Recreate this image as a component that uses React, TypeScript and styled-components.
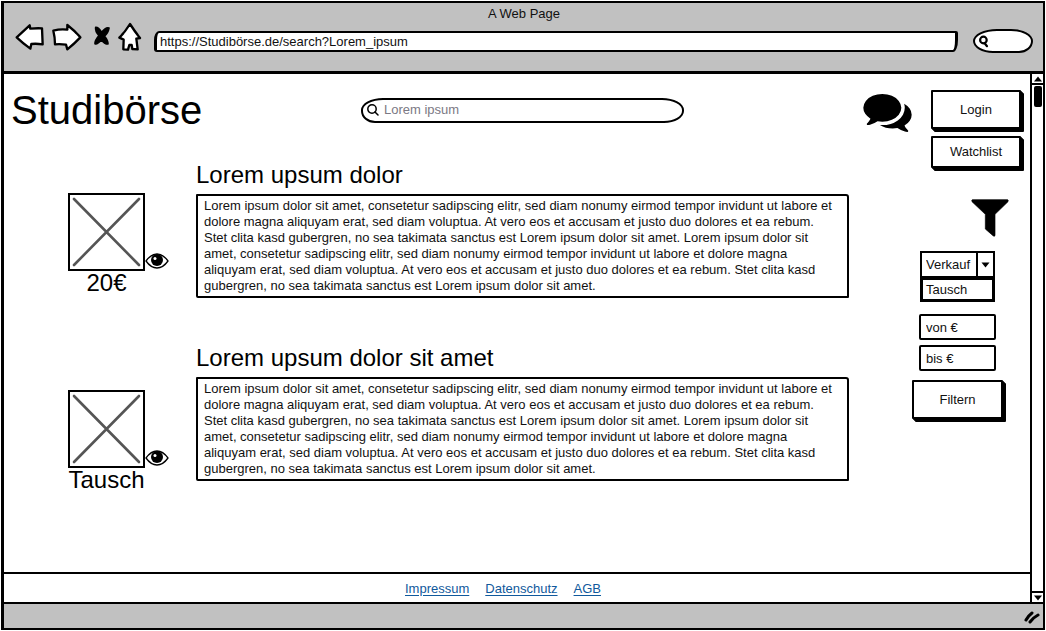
import React from "react";
import styled, { createGlobalStyle } from "styled-components";

const ink = "#000";
const chrome = "#c1c1c1";

const GlobalStyle = createGlobalStyle`
  *, *::before, *::after { box-sizing: border-box; }
  body {
    margin: 0;
    padding: 1px;
    background: #fff;
    color: #111;
    font-family: "Liberation Sans", Arial, sans-serif;
    font-size: 13px;
    line-height: 16px;
  }
  button, input, select { font: inherit; color: inherit; }
  h1, h2, p, ul, figure { margin: 0; padding: 0; }
  svg { display: block; flex: none; }
`;

const BrowserFrame = styled.div`
  display: flex;
  flex-direction: column;
  min-height: calc(100vh - 2px);
  border: 2px solid ${ink};
  border-left-width: 3px;
`;

const Toolbar = styled.header`
  padding: 3px 10px 11px 11px;
  background: ${chrome};
  border-bottom: 3px solid ${ink};
`;

const WindowTitle = styled.div`
  text-align: center;
`;

const ToolbarRow = styled.div`
  display: flex;
  align-items: center;
  gap: 15px;
`;

const NavGroup = styled.nav`
  display: flex;
  gap: 6px;
  margin-right: -4px;
`;

const NavButton = styled.button`
  padding: 0;
  border: 0;
  background: none;
`;

const AddressInput = styled.input`
  flex: 1;
  min-width: 0;
  height: 21px;
  padding: 0 3px;
  border: 2px solid ${ink};
  border-left-width: 3px;
  border-right-width: 3px;
  border-radius: 5px 2px 5px 3px / 9px 2px 12px 3px;
  background: #fff;
`;

const SearchPill = styled.label<{ $compact?: boolean }>`
  display: flex;
  align-items: center;
  gap: 5px;
  width: ${(p) => (p.$compact ? "60px" : "auto")};
  height: ${(p) => (p.$compact ? "24px" : "25px")};
  padding: 0 4px;
  border: 2px solid ${ink};
  border-radius: ${(p) => (p.$compact ? "24px 22px 14px 20px / 12px" : "22px 22px 20px 14px / 12px")};
  background: #fff;
`;

const PillInput = styled.input`
  flex: 1;
  min-width: 0;
  padding: 0;
  border: 0;
  outline: 0;
  background: none;
  &::placeholder { color: #7b7984; opacity: 1; }
`;

const Viewport = styled.div`
  display: flex;
  flex: 1;
`;

const Page = styled.div`
  display: flex;
  flex: 1;
  flex-direction: column;
  min-width: 0;
`;

const PageBody = styled.div`
  display: flex;
  flex: 1;
`;

const MainColumn = styled.main`
  flex: 1;
  min-width: 0;
`;

const Masthead = styled.div`
  display: grid;
  grid-template-columns: 350fr 323fr 165fr;
  align-items: center;
  height: 72px;
  padding-left: 7px;
`;

const SiteName = styled.h1`
  color: ${ink};
  font-size: 40px;
  font-weight: 400;
  line-height: 44px;
`;

const ResultList = styled.div`
  display: flex;
  flex-direction: column;
  gap: 46px;
  padding: 15px 0 24px 64px;
`;

const Result = styled.article`
  display: flex;
  gap: 27px;
`;

const Offer = styled.figure<{ $lowered?: boolean }>`
  width: 101px;
  height: 102px;
  margin-top: ${(p) => (p.$lowered ? "46px" : "32px")};
  margin-bottom: ${(p) => (p.$lowered ? "-13px" : "0")};
`;

const Picture = styled.div`
  display: flex;
  align-items: flex-end;
`;

const Thumbnail = styled.div`
  width: 77px;
  height: 78px;
  border: 2px solid ${ink};
`;

const WatchButton = styled.button`
  padding: 0;
  border: 0;
  background: none;
`;

const OfferLabel = styled.figcaption`
  width: 77px;
  color: ${ink};
  font-size: 24px;
  line-height: 24px;
  text-align: center;
  white-space: nowrap;
`;

const ResultText = styled.div`
  flex: 1;
  min-width: 0;
`;

const ResultTitle = styled.h2`
  margin-bottom: 5px;
  color: ${ink};
  font-size: 24px;
  font-weight: 400;
  line-height: 28px;
`;

const Description = styled.p`
  padding: 2px 5px 2px 6px;
  border: 2px solid ${ink};
  border-radius: 1px 3px 1px 2px;
`;

const Line = styled.span`
  display: block;
  white-space: nowrap;
`;

const Sidebar = styled.aside`
  display: flex;
  flex: none;
  flex-direction: column;
  align-items: flex-end;
  width: 181px;
  padding: 16px 9px 0 14px;
`;

const AccountRow = styled.div`
  display: flex;
  gap: 19px;
`;

const ChatLink = styled.a`
  padding-top: 4px;
  color: ${ink};
`;

const AccountButtons = styled.div`
  display: flex;
  flex-direction: column;
  gap: 7px;
  width: 90px;
`;

const SketchButton = styled.button<{ $size: "small" | "large" }>`
  width: 100%;
  height: ${(p) => (p.$size === "large" ? "39px" : "32px")};
  padding: 0;
  border: 2px solid ${ink};
  border-radius: 1px;
  background: #fff;
  box-shadow: 1px 1px 0 ${ink}, 2px 2px 0 ${ink}, 3px 3px 0 ${ink};
`;

const FunnelMark = styled.div`
  margin: 31px 12px 14px 0;
`;

const FilterForm = styled.form`
  display: flex;
  flex-direction: column;
  align-items: center;
  width: 91px;
  margin-right: 18px;
`;

const SelectGroup = styled.div`
  width: 75px;
`;

const SelectBox = styled.div`
  position: relative;
`;

const KindSelect = styled.select`
  display: block;
  width: 100%;
  height: 27px;
  padding: 0 4px;
  border: 2px solid ${ink};
  border-radius: 0;
  background: #fff;
  appearance: none;
`;

const SelectArrow = styled.span`
  position: absolute;
  top: 2px;
  right: 2px;
  bottom: 2px;
  display: flex;
  align-items: center;
  justify-content: center;
  width: 17px;
  border-left: 2px solid ${ink};
  background: #fff;
  pointer-events: none;
`;

const OptionList = styled.ul`
  height: 24px;
  padding: 2px 3px;
  border: 3px solid ${ink};
  border-top-width: 2px;
  list-style: none;
`;

const PriceFields = styled.div`
  display: flex;
  flex-direction: column;
  gap: 5px;
  width: 77px;
  margin: 12px 0 9px;
`;

const PriceInput = styled.input`
  width: 100%;
  height: 26px;
  padding: 0 5px;
  border: 2px solid ${ink};
  border-radius: 2px;
  background: #fff;
  &::placeholder { color: #111; opacity: 1; }
`;

const PageFooter = styled.footer`
  display: flex;
  justify-content: center;
  gap: 16px;
  padding: 7px 28px 5px 0;
  border-top: 2px solid ${ink};
`;

const FooterLink = styled.a`
  color: #10599c;
  text-decoration: underline;
  text-underline-offset: 2px;
`;

const Scrollbar = styled.div`
  display: flex;
  flex: none;
  flex-direction: column;
  justify-content: space-between;
  width: 13px;
  border-left: 2px solid ${ink};
`;

const ScrollArrow = styled.button<{ $end?: boolean }>`
  display: flex;
  align-items: center;
  justify-content: center;
  height: 11px;
  padding: 0;
  border: 0 solid ${ink};
  border-width: ${(p) => (p.$end ? "2px 0 0" : "0 0 2px")};
  background: #fff;
`;

const ScrollThumb = styled.div`
  width: 8px;
  height: 21px;
  margin: 1px auto auto 2px;
  border-radius: 2px;
  background: ${ink};
`;

const StatusBar = styled.div`
  display: flex;
  align-items: center;
  justify-content: flex-end;
  height: 26px;
  padding-right: 2px;
  border-top: 2px solid ${ink};
  background: ${chrome};
`;

const navIcons = [
  {
    name: "Back",
    box: "45 66 90 114",
    width: 30,
    d: "M50 112 89 76 91 86Q110 84 126 85L128 133Q108 130 94 132L91 146Q70 131 50 112Z",
  },
  {
    name: "Forward",
    box: "153 66 96 114",
    width: 32,
    d: "M160 92Q182 86 202 89L202 75Q224 92 241 112 222 132 202 148L198 134Q180 131 165 133 165 112 160 92Z",
  },
  {
    name: "Stop",
    box: "267 66 69 114",
    width: 23,
    d: "M287 82Q295 81 305 97 318 80 327 84 324 100 313 108 324 121 324 132 313 132 304 119 292 134 285 131 285 121 297 107 285 93 287 82Z",
    solid: true,
  },
  {
    name: "Home",
    box: "354 66 75 114",
    width: 25,
    d: "M390 72Q404 94 420 114L409 116 413 148 397 147 395 135 388 135 384 149 370 148 371 119 358 113Q376 95 390 72Z",
  },
];

function NavIcon({ icon }: { icon: (typeof navIcons)[number] }) {
  return (
    <svg width={icon.width} height="38" viewBox={icon.box} aria-hidden="true">
      <path
        d={icon.d}
        fill={icon.solid ? ink : "#fff"}
        stroke={ink}
        strokeWidth={icon.solid ? 5 : 7}
        strokeLinejoin="round"
      />
    </svg>
  );
}

function MagnifierIcon({ heavy }: { heavy?: boolean }) {
  return heavy ? (
    <svg width="12" height="14" viewBox="0 0 12 14" fill="none" stroke={ink} strokeWidth="2.2" aria-hidden="true">
      <circle cx="4.400" cy="6" r="3.3" />
      <path d="M5.500 9 8 12.200" strokeLinecap="round" />
    </svg>
  ) : (
    <svg width="12" height="12" viewBox="0 0 12 12" fill="none" stroke={ink} strokeWidth="1.5" aria-hidden="true">
      <circle cx="5" cy="5" r="4.200" />
      <path d="M8 8 11 11" strokeLinecap="round" />
    </svg>
  );
}

function CrossedBox() {
  return (
    <svg width="73" height="74" viewBox="0 0 73 74" stroke="#555" strokeWidth="2.6" strokeLinecap="round" aria-hidden="true">
      <path d="M4 4 69 70M69 4 4 70" />
    </svg>
  );
}

function EyeIcon() {
  return (
    <svg width="24" height="20" viewBox="0 0 24 20" aria-hidden="true">
      <path d="M1 10Q6 3 12 3T23 10Q18 17 12 17T1 10Z" fill="#fff" stroke={ink} strokeWidth="1.300" strokeLinejoin="round" />
      <circle cx="12" cy="9" r="6" fill={ink} />
      <circle cx="10" cy="7.500" r="1.500" fill="#fff" />
    </svg>
  );
}

function ChatIcon() {
  return (
    <svg width="49" height="38" viewBox="0 256 1792 1408" fill="currentColor" aria-hidden="true">
      <path d="M1408 768q0 139-94 257t-256.500 186.500-353.500 68.500q-86 0-176-16-124 88-278 128-36 9-86 16h-3q-11 0-20.500-8t-11.500-21q-1-3-1-6.500t.5-6.500 2-6l2.500-5 3.500-5.500 4-5 4.500-5 4-4.500q5-6 23-25t26-29.500 22.500-29 25-38.500 20.500-44q-124-72-195-177t-71-224q0-139 94-257t256.500-186.500 353.500-68.500 353.500 68.500 256.500 186.500 94 257zm384 256q0 120-71 224.500t-195 176.500q10 24 20.500 44t25 38.500 22.500 29 26 29.500 23 25q1 1 4 4.500t4.500 5 4 5 3.500 5.500l2.500 5 2 6 .5 6.500-1 6.500q-3 14-13 22t-22 7q-50-7-86-16-154-40-278-128-90 16-176 16-271 0-472-132 58 4 88 4 161 0 309-45t264-129q125-92 192-212t67-254q0-77-23-152 129 71 204 178t75 230z" />
    </svg>
  );
}

function FunnelIcon() {
  return (
    <svg width="38" height="38" viewBox="0 0 114 114" aria-hidden="true">
      <path
        d="M4 2H110Q113 3 111 8L72 46V110Q70 113 66 110L43 90V46L3 8Q1 3 4 2Z"
        fill={ink}
        stroke={ink}
        strokeWidth="2"
      />
    </svg>
  );
}

function Triangle({ down, size = 8 }: { down?: boolean; size?: number }) {
  return (
    <svg width={size} height="6" viewBox="0 0 8 6" aria-hidden="true">
      <path d={down ? "M0 .5H8L4 5.500Z" : "M0 5.500H8L4 .5Z"} fill={ink} />
    </svg>
  );
}

const descriptionLines = [
  "Lorem ipsum dolor sit amet, consetetur sadipscing elitr, sed diam nonumy eirmod tempor invidunt ut labore et",
  "dolore magna aliquyam erat, sed diam voluptua. At vero eos et accusam et justo duo dolores et ea rebum.",
  "Stet clita kasd gubergren, no sea takimata sanctus est Lorem ipsum dolor sit amet. Lorem ipsum dolor sit",
  "amet, consetetur sadipscing elitr, sed diam nonumy eirmod tempor invidunt ut labore et dolore magna",
  "aliquyam erat, sed diam voluptua. At vero eos et accusam et justo duo dolores et ea rebum. Stet clita kasd",
  "gubergren, no sea takimata sanctus est Lorem ipsum dolor sit amet.",
];

const results = [
  { title: "Lorem upsum dolor", offer: "20€", lowered: false },
  { title: "Lorem upsum dolor sit amet", offer: "Tausch", lowered: true },
];

export default function App() {
  return (
    <>
      <GlobalStyle />
      <BrowserFrame>
        <Toolbar>
          <WindowTitle>A Web Page</WindowTitle>
          <ToolbarRow>
            <NavGroup aria-label="Browser">
              {navIcons.map((icon) => (
                <NavButton key={icon.name} type="button" aria-label={icon.name}>
                  <NavIcon icon={icon} />
                </NavButton>
              ))}
            </NavGroup>
            <AddressInput aria-label="Address" defaultValue="https://Studibörse.de/search?Lorem_ipsum" />
            <SearchPill $compact>
              <MagnifierIcon heavy />
              <PillInput aria-label="Web search" />
            </SearchPill>
          </ToolbarRow>
        </Toolbar>

        <Viewport>
          <Page>
            <PageBody>
              <MainColumn>
                <Masthead>
                  <SiteName>Studibörse</SiteName>
                  <SearchPill>
                    <MagnifierIcon />
                    <PillInput type="text" aria-label="Suche" placeholder="Lorem ipsum" />
                  </SearchPill>
                </Masthead>
                <ResultList>
                  {results.map((result) => (
                    <Result key={result.title}>
                      <Offer $lowered={result.lowered}>
                        <Picture>
                          <Thumbnail>
                            <CrossedBox />
                          </Thumbnail>
                          <WatchButton type="button" aria-label="Beobachten">
                            <EyeIcon />
                          </WatchButton>
                        </Picture>
                        <OfferLabel>{result.offer}</OfferLabel>
                      </Offer>
                      <ResultText>
                        <ResultTitle>{result.title}</ResultTitle>
                        <Description>
                          {descriptionLines.map((line) => (
                            <Line key={line}>{line}</Line>
                          ))}
                        </Description>
                      </ResultText>
                    </Result>
                  ))}
                </ResultList>
              </MainColumn>

              <Sidebar>
                <AccountRow>
                  <ChatLink href="#chat" aria-label="Chat">
                    <ChatIcon />
                  </ChatLink>
                  <AccountButtons>
                    <SketchButton type="button" $size="large">Login</SketchButton>
                    <SketchButton type="button" $size="small">Watchlist</SketchButton>
                  </AccountButtons>
                </AccountRow>
                <FunnelMark>
                  <FunnelIcon />
                </FunnelMark>
                <FilterForm onSubmit={(event) => event.preventDefault()}>
                  <SelectGroup>
                    <SelectBox>
                      <KindSelect aria-label="Angebotsart" defaultValue="Verkauf">
                        <option>Verkauf</option>
                        <option>Tausch</option>
                      </KindSelect>
                      <SelectArrow>
                        <Triangle down size={9} />
                      </SelectArrow>
                    </SelectBox>
                    <OptionList>
                      <li>Tausch</li>
                    </OptionList>
                  </SelectGroup>
                  <PriceFields>
                    <PriceInput aria-label="Preis von" placeholder="von €" />
                    <PriceInput aria-label="Preis bis" placeholder="bis €" />
                  </PriceFields>
                  <SketchButton type="submit" $size="large">Filtern</SketchButton>
                </FilterForm>
              </Sidebar>
            </PageBody>

            <PageFooter>
              <FooterLink href="#impressum">Impressum</FooterLink>
              <FooterLink href="#datenschutz">Datenschutz</FooterLink>
              <FooterLink href="#agb">AGB</FooterLink>
            </PageFooter>
          </Page>

          <Scrollbar>
            <ScrollArrow type="button" aria-label="Nach oben">
              <Triangle />
            </ScrollArrow>
            <ScrollThumb />
            <ScrollArrow type="button" aria-label="Nach unten" $end>
              <Triangle down />
            </ScrollArrow>
          </Scrollbar>
        </Viewport>

        <StatusBar>
          <svg width="18" height="16" viewBox="0 0 18 16" fill="none" stroke={ink} strokeWidth="3" strokeLinecap="round" aria-hidden="true">
            <path d="M3 12Q5 8 9 5M7 14Q11 9 15 7" />
          </svg>
        </StatusBar>
      </BrowserFrame>
    </>
  );
}
